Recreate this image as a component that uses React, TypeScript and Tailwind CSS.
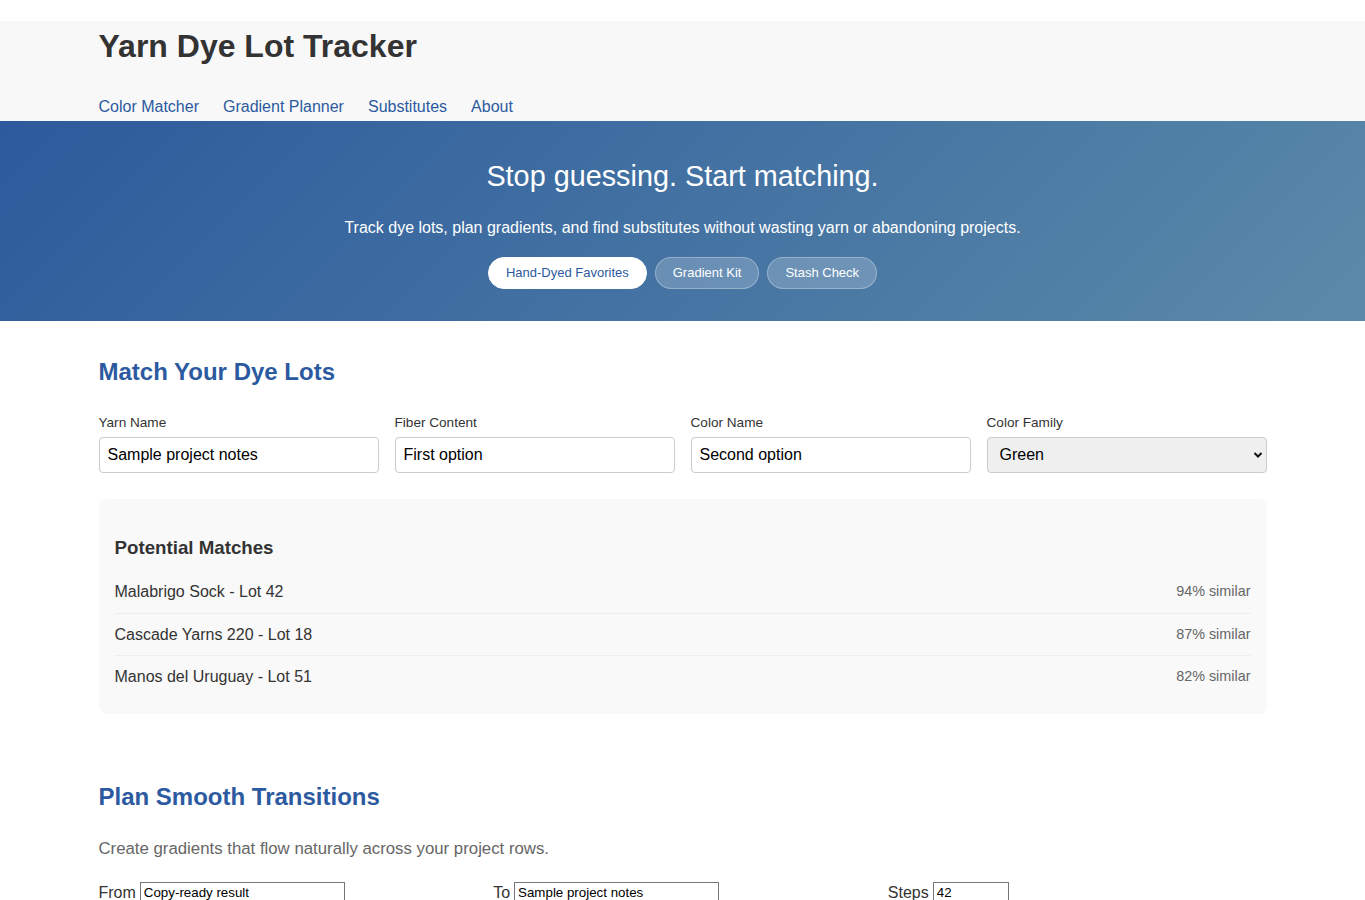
import React from "react";

const font = { fontFamily: '"Liberation Sans", Arial, sans-serif' };

export default function App() {
  const matches = [
    ["Malabrigo Sock - Lot 42", "94% similar"],
    ["Cascade Yarns 220 - Lot 18", "87% similar"],
    ["Manos del Uruguay - Lot 51", "82% similar"],
  ];
  return (
    <div className="bg-white text-[#333] min-h-[900px]" style={font}>
      <header className="mt-[21px] bg-[#f8f8f8] pt-[6px] pb-[2px]">
        <div className="max-w-[1200px] mx-auto px-4">
          <h1 className="text-[32px] leading-[38px] font-bold text-[#333]">Yarn Dye Lot Tracker</h1>
          <nav className="mt-[30px] flex gap-6 text-[16px] leading-[24px] text-[#2c5aa0]">
            <a href="#">Color Matcher</a>
            <a href="#">Gradient Planner</a>
            <a href="#">Substitutes</a>
            <a href="#">About</a>
          </nav>
        </div>
      </header>

      <section className="h-[200px] bg-[linear-gradient(135deg,#2c5a9c_0%,#5b8aa9_100%)] text-white text-center flex flex-col items-center pt-[38px]">
        <h2 className="text-[28.8px] leading-[34px] font-normal">Stop guessing. Start matching.</h2>
        <p className="mt-[23px] text-[16px] leading-[24px]">
          Track dye lots, plan gradients, and find substitutes without wasting yarn or abandoning projects.
        </p>
        <div className="mt-[17px] flex gap-2 justify-center">
          <button className="h-[32px] px-[17px] rounded-full bg-white text-[#2c5aa0] text-[13px] border border-white">
            Hand-Dyed Favorites
          </button>
          <button className="h-[32px] px-[17px] rounded-full bg-white/20 text-white text-[13px] border border-white/30">
            Gradient Kit
          </button>
          <button className="h-[32px] px-[17px] rounded-full bg-white/20 text-white text-[13px] border border-white/30">
            Stash Check
          </button>
        </div>
      </section>

      <section className="max-w-[1200px] mx-auto px-4 pt-[33px] pb-8">
        <h2 className="text-[24px] leading-[36px] font-bold text-[#2c5aa0]">Match Your Dye Lots</h2>
        <div className="mt-[24px] grid grid-cols-4 gap-4">
          {[
            ["Yarn Name", "Sample project notes"],
            ["Fiber Content", "First option"],
            ["Color Name", "Second option"],
          ].map(([l, v]) => (
            <div key={l}>
              <label className="block text-[13.6px] leading-[18px] text-[#333]">{l}</label>
              <input
                readOnly
                value={v}
                className="mt-[5px] w-full h-[36px] px-2 border border-[#ccc] rounded-[4px] bg-white text-[16px] text-black"
                style={font}
              />
            </div>
          ))}
          <div>
            <label className="block text-[13.6px] leading-[18px] text-[#333]">Color Family</label>
            <div className="relative mt-[5px]">
              <select
                className="appearance-none w-full h-[36px] pl-3 pr-6 border border-[#ccc] rounded-[4px] bg-[#efefef] text-[16px] text-black"
                style={font}
                defaultValue="Green"
              >
                <option>Green</option>
                <option>Blue</option>
                <option>Red</option>
              </select>
              <svg className="absolute right-[4px] top-[14px] pointer-events-none" width="10" height="8" viewBox="0 0 10 8">
                <path d="M1.5 2 L5 5.5 L8.5 2" stroke="#111" strokeWidth="2" fill="none" />
              </svg>
            </div>
          </div>
        </div>

        <div className="mt-[26px] bg-[#f9f9f9] rounded-[8px] px-4 pt-[38px] pb-4">
          <h3 className="text-[18.72px] leading-[22px] font-bold text-[#333]">Potential Matches</h3>
          <div className="mt-[12px]">
            {matches.map(([n, s], i) => (
              <div
                key={n}
                className={`flex justify-between items-center py-2 ${i < matches.length - 1 ? "border-b border-[#eee]" : ""}`}
              >
                <span className="text-[16px] leading-[25.5px] text-[#333]">{n}</span>
                <span className="text-[14.4px] leading-[25.5px] text-[#666]">{s}</span>
              </div>
            ))}
          </div>
        </div>
      </section>

      <section className="max-w-[1200px] mx-auto px-4 pt-[33px] pb-8">
        <h2 className="text-[24px] leading-[36px] font-bold text-[#2c5aa0]">Plan Smooth Transitions</h2>
        <p className="mt-[22px] text-[16.8px] leading-[24px] text-[#666]">
          Create gradients that flow naturally across your project rows.
        </p>
        <div className="mt-[21px] grid grid-cols-3 gap-4">
          <div className="flex items-start gap-1 text-[16px] text-[#333]">
            <span className="leading-[22px]">From</span>
            <input readOnly value="Copy-ready result" className="w-[205px] h-[22px] px-[3px] border border-[#767676] text-[13.33px] text-black bg-white" style={font} />
          </div>
          <div className="flex items-start gap-1 text-[16px] text-[#333]">
            <span className="leading-[22px]">To</span>
            <input readOnly value="Sample project notes" className="w-[205px] h-[22px] px-[3px] border border-[#767676] text-[13.33px] text-black bg-white" style={font} />
          </div>
          <div className="flex items-start gap-1 text-[16px] text-[#333]">
            <span className="leading-[22px]">Steps</span>
            <input readOnly value="42" className="w-[76px] h-[22px] px-[3px] border border-[#767676] text-[13.33px] text-black bg-white" style={font} />
          </div>
        </div>
      </section>
    </div>
  );
}
